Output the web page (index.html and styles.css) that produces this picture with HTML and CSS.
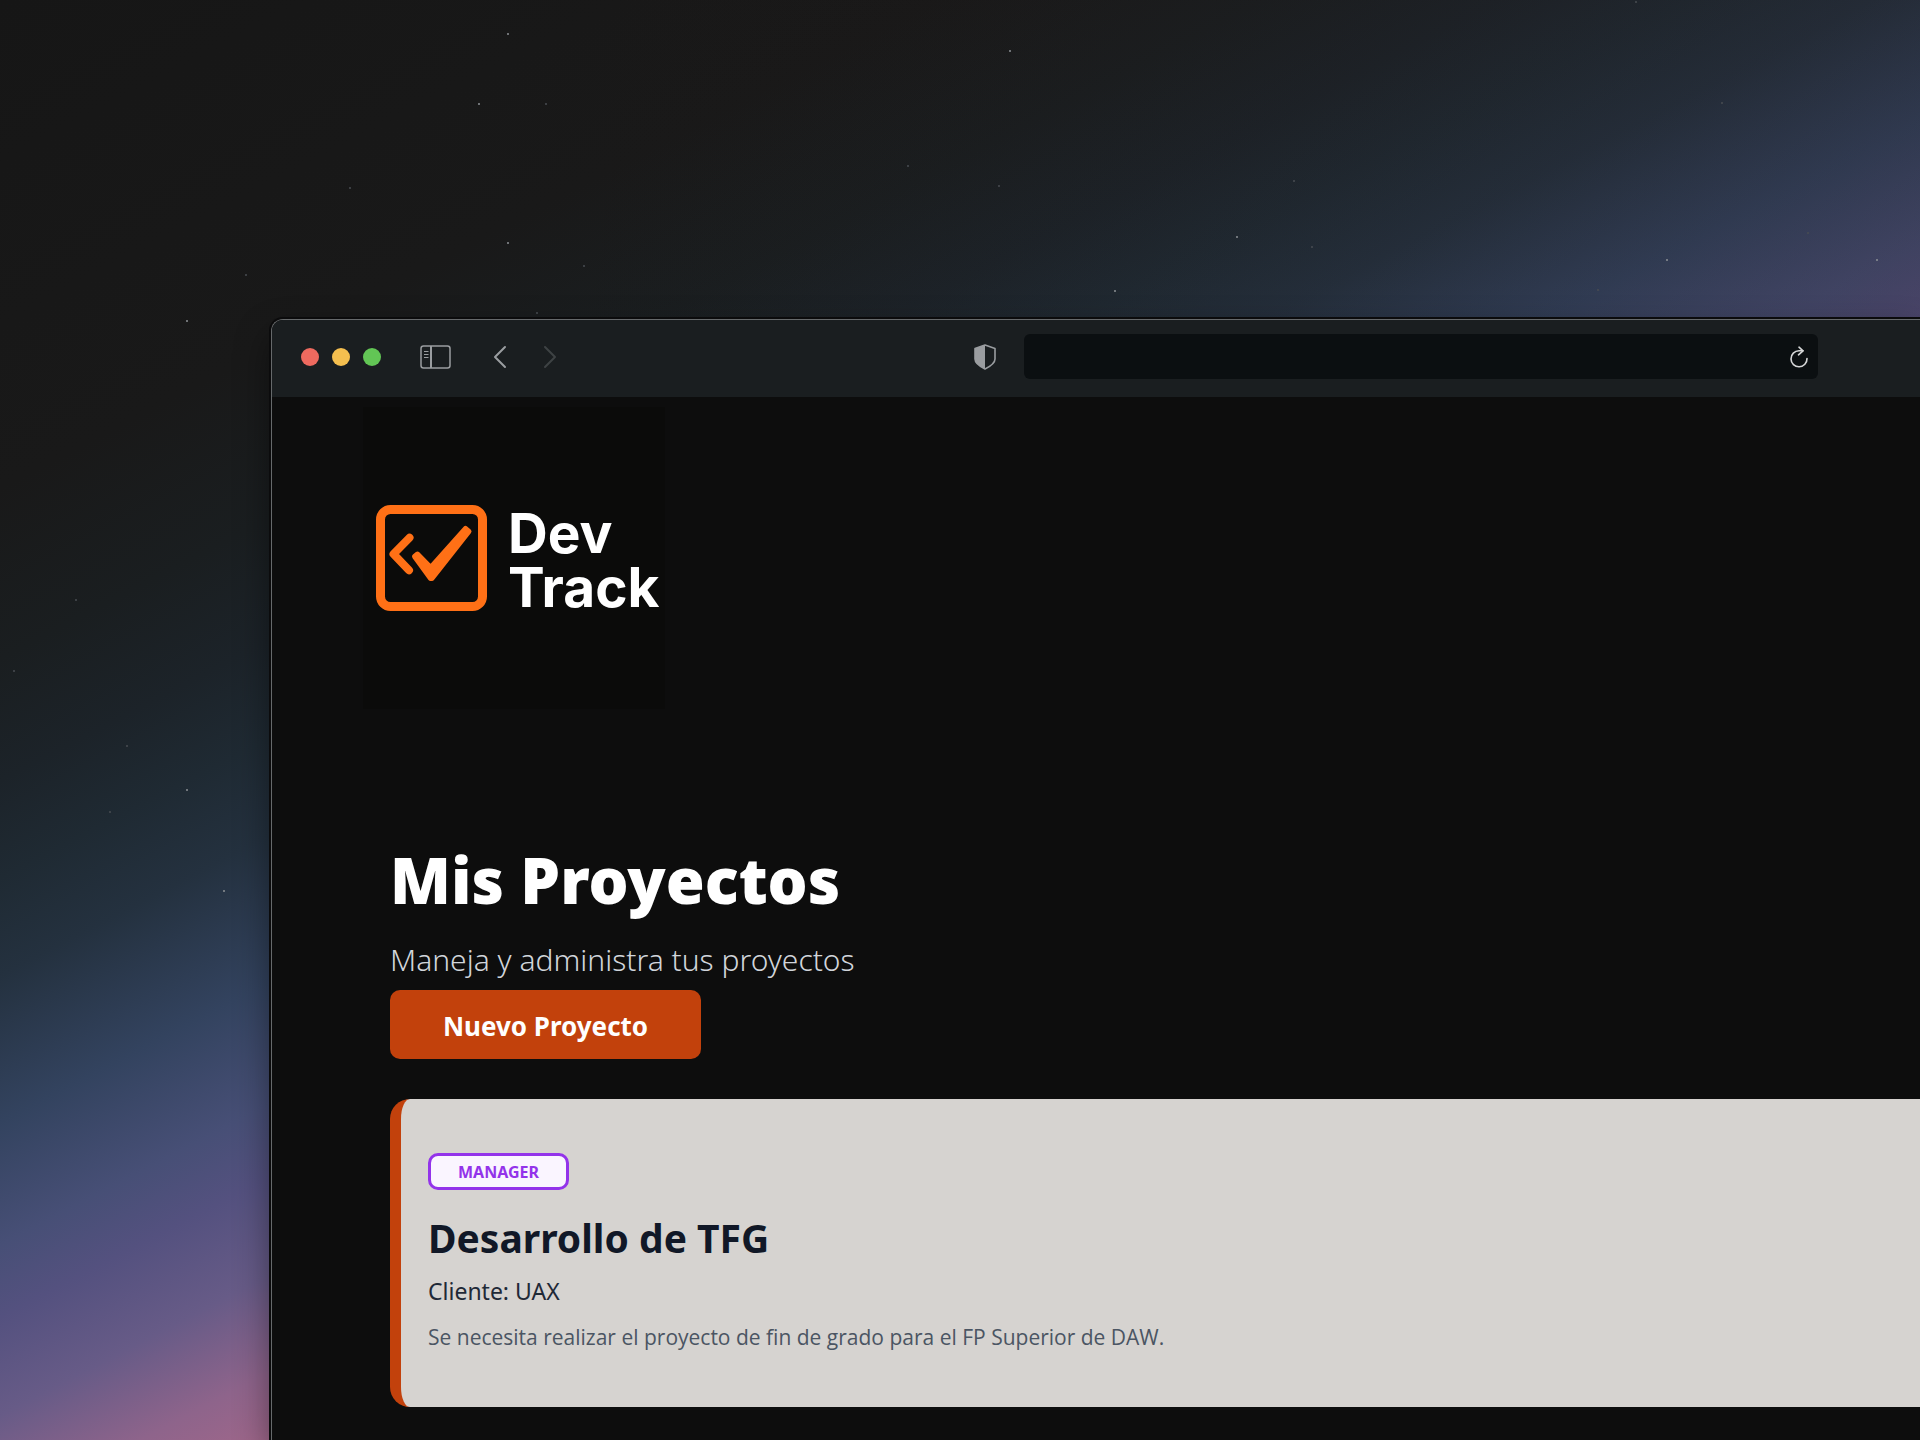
FILE: index.html
```html
<!DOCTYPE html>
<html lang="es">
<head>
<meta charset="utf-8">
<meta name="viewport" content="width=device-width, initial-scale=1">
<title>DevTrack</title>
<link rel="stylesheet" href="styles.css">
</head>
<body>
<div class="desktop">
  <svg class="stars" viewBox="0 0 1920 1440" preserveAspectRatio="xMidYMid slice" aria-hidden="true">
    <g class="stars-bright">
      <circle cx="508" cy="34" r="1"/><circle cx="508" cy="243" r="1"/><circle cx="187" cy="321" r="1"/>
      <circle cx="1237" cy="237" r="1"/><circle cx="1115" cy="291" r="1"/><circle cx="187" cy="790" r="1"/>
      <circle cx="1877" cy="260" r="1"/><circle cx="1667" cy="260" r="1"/><circle cx="479" cy="104" r="1"/>
      <circle cx="1010" cy="51" r="1"/><circle cx="224" cy="891" r="1"/>
    </g>
    <g class="stars-dim">
      <circle cx="350" cy="188" r="1"/><circle cx="246" cy="275" r="1"/><circle cx="584" cy="266" r="1"/>
      <circle cx="537" cy="313" r="1"/><circle cx="908" cy="166" r="1"/><circle cx="1312" cy="247" r="1"/>
      <circle cx="1808" cy="233" r="1"/><circle cx="1598" cy="290" r="1"/><circle cx="76" cy="600" r="1"/>
      <circle cx="127" cy="746" r="1"/><circle cx="14" cy="671" r="1"/><circle cx="110" cy="812" r="1"/>
      <circle cx="546" cy="104" r="1"/><circle cx="1722" cy="103" r="1"/><circle cx="1294" cy="181" r="1"/>
      <circle cx="999" cy="186" r="1"/><circle cx="1636" cy="2" r="1"/>
    </g>
  </svg>

  <div class="window">
    <header class="toolbar">
      <div class="lights">
        <button class="light light-close" type="button" aria-label="Cerrar"></button>
        <button class="light light-min" type="button" aria-label="Minimizar"></button>
        <button class="light light-max" type="button" aria-label="Maximizar"></button>
      </div>
      <button class="tool tool-sidebar" type="button" aria-label="Barra lateral">
        <svg width="32" height="24" viewBox="0 0 32 24" fill="none" stroke="#9a9da0" stroke-width="1.5">
          <rect x="1" y="1" width="29" height="22" rx="2.5"/>
          <path d="M11 1v22" stroke-width="2"/>
          <path d="M4 6.500h4.500M4 9.500h4.500M4 12.500h4.500" stroke-width="1.200"/>
        </svg>
      </button>
      <button class="tool tool-back" type="button" aria-label="Atrás">
        <svg width="14" height="24" viewBox="0 0 14 24" fill="none" stroke="#9a9da0" stroke-width="2" stroke-linecap="round" stroke-linejoin="round"><path d="M12 2 2 12l10 10"/></svg>
      </button>
      <button class="tool tool-forward" type="button" aria-label="Adelante" disabled>
        <svg width="14" height="24" viewBox="0 0 14 24" fill="none" stroke="#3e4244" stroke-width="2" stroke-linecap="round" stroke-linejoin="round"><path d="m2 2 10 10L2 22"/></svg>
      </button>
      <button class="tool tool-shield" type="button" aria-label="Privacidad">
        <svg width="22" height="26" viewBox="0 0 22 26">
          <path d="M11 1 21 4.500V15c0 4-4 7-10 10C5 22 1 19 1 15V4.500z" fill="none" stroke="#9a9da0" stroke-width="1.600" stroke-linejoin="round"/>
          <path d="M11 1 1 4.500V15c0 4 4 7 10 10z" fill="#9a9da0"/>
        </svg>
      </button>
      <div class="address">
        <input class="address-input" type="text" aria-label="Dirección">
        <button class="tool" type="button" aria-label="Recargar">
          <svg width="18" height="22" viewBox="0 0 18 22" fill="none" stroke="#d6d7d8" stroke-width="1.600" stroke-linecap="round" stroke-linejoin="round">
            <path d="M17 12.500A8 8 0 1 1 9 4.800h4"/>
            <path d="m9 1.200 4 3.600-4.500 4"/>
          </svg>
        </button>
      </div>
    </header>

    <main class="page">
      <div class="brand">
        <svg width="111" height="106" viewBox="0 0 111 106" aria-hidden="true">
          <rect x="4.500" y="4.500" width="102" height="97" rx="10" fill="none" stroke="#ff7016" stroke-width="9"/>
          <path d="M33.500 32.700 17.500 49 33 65.300" fill="none" stroke="#ff7016" stroke-width="8" stroke-linecap="round" stroke-linejoin="round"/>
          <path d="M41.500 49 54.700 62.500 89.500 23.500 93 26.500 56 73.500H54.500L38.500 51.500z" fill="#ff7016" stroke="#ff7016" stroke-width="5" stroke-linejoin="round"/>
        </svg>
        <span class="brand-name">Dev<br>Track</span>
      </div>

      <section class="projects">
        <h1 class="title">Mis Proyectos</h1>
        <p class="subtitle">Maneja y administra tus proyectos</p>
        <button class="new-project" type="button">Nuevo Proyecto</button>

        <article class="card">
          <span class="role">MANAGER</span>
          <h2 class="card-title">Desarrollo de TFG</h2>
          <p class="client">Cliente: UAX</p>
          <p class="description">Se necesita realizar el proyecto de fin de grado para el FP Superior de DAW.</p>
        </article>
      </section>
    </main>
  </div>
</div>
</body>
</html>
```
FILE: styles.css
```css
*, *::before, *::after { box-sizing: border-box; }

body {
  margin: 0;
  background: #171717;
  font-family: "Noto Sans", "Open Sans", sans-serif;
}

h1, h2, p { margin: 0; }

button {
  border: 0;
  padding: 0;
  background: none;
  font-family: inherit;
}

/* Night-sky wallpaper */
.desktop {
  position: relative;
  display: flex;
  flex-direction: column;
  min-height: 100vh;
  padding: 319px 0 0 271px;
  overflow: hidden;
  background:
    linear-gradient(90deg, rgba(35, 20, 20, 0) 25%, rgba(35, 20, 20, 0.220) 100%),
    linear-gradient(152.5deg,
    #161616 0%, #191919 20%, #1a1e20 27%, #1c2329 32%, #1f2a33 36%,
    #24313f 40%, #33435f 46%, #474f76 51%, #54517f 54%, #675b87 58%,
    #8e648b 62%, #a0678a 65%, #a86b88 68%);
}

.stars {
  position: absolute;
  inset: 0;
  width: 100%;
  height: 100%;
}
.stars-bright { fill: #8c9094; }
.stars-dim { fill: #484d52; }

/* Browser window */
.window {
  position: relative;
  display: flex;
  flex: 1;
  flex-direction: column;
  border: solid #66696b;
  border-width: 1px 0 0 1px;
  border-radius: 12px 0 0 0;
  background: #0d0d0d;
  box-shadow: 0 0 0 2px #0b0b0c, 0 16px 36px rgba(0, 0, 0, 0.450);
}

.toolbar {
  display: flex;
  align-items: center;
  padding: 14px 102px 18px 29px;
  border-radius: 11px 0 0 0;
  background: #1a1e20;
}

.lights { display: flex; gap: 13px; }
.light { width: 18px; height: 18px; border-radius: 50%; }
.light-close { background: #ee6a5f; }
.light-min { background: #f5bf4f; }
.light-max { background: #62c655; }

.tool { display: flex; flex: none; }
.tool-sidebar { margin-left: 39px; }
.tool-back { margin-left: 41px; }
.tool-forward { margin-left: 36px; }
.tool-shield { margin-left: auto; }

.address {
  display: flex;
  align-items: center;
  width: 53%;
  max-width: 794px;
  height: 45px;
  margin-left: 28px;
  padding: 0 10px;
  border-radius: 6px;
  background: #0b0f11;
}
.address-input {
  flex: 1;
  min-width: 0;
  height: 100%;
  border: 0;
  outline: 0;
  background: none;
  color: #d6d7d8;
  font: 18px "Noto Sans", sans-serif;
}

/* Page */
.page { flex: 1; padding: 10px 0 33px 91px; }

.brand {
  display: flex;
  align-items: center;
  gap: 21px;
  width: 302px;
  height: 302px;
  padding-left: 13px;
  background: #0b0b0a;
}
.brand-name {
  padding-top: 4px;
  color: #fff;
  font: 700 55px/54px Inter, "Liberation Sans", sans-serif;
}

.projects { padding: 135px 0 0 27px; }

.title {
  color: #fff;
  font-size: 63px;
  font-weight: 900;
  line-height: 72px;
}
.subtitle {
  margin-top: 23px;
  color: #d1d5db;
  font-size: 30px;
  font-weight: 300;
  line-height: 42px;
}
.new-project {
  display: block;
  width: 311px;
  height: 69px;
  margin-top: 9px;
  padding-top: 2px;
  border-radius: 10px;
  background: #c2410c;
  color: #fff;
  font-size: 26px;
  font-weight: 700;
}

.card {
  margin-top: 40px;
  padding: 54px 27px;
  border-left: 11px solid #c2410c;
  border-radius: 20px 0 0 20px;
  background: #d6d3d0;
}
.role {
  display: flex;
  align-items: center;
  justify-content: center;
  width: 141px;
  height: 37px;
  border: 3px solid #9333ea;
  border-radius: 10px;
  background: #faf5ff;
  color: #9333ea;
  font-size: 16px;
  font-weight: 700;
}
.card-title {
  margin-top: 24px;
  color: #111827;
  font-size: 39px;
  font-weight: 700;
  line-height: 48px;
}
.client {
  margin-top: 12px;
  color: #1f2937;
  font-size: 23px;
  line-height: 34px;
}
.description {
  margin-top: 13px;
  color: #4b5563;
  font-family: "Open Sans", "Noto Sans", sans-serif;
  font-size: 21px;
  line-height: 32px;
}
```
